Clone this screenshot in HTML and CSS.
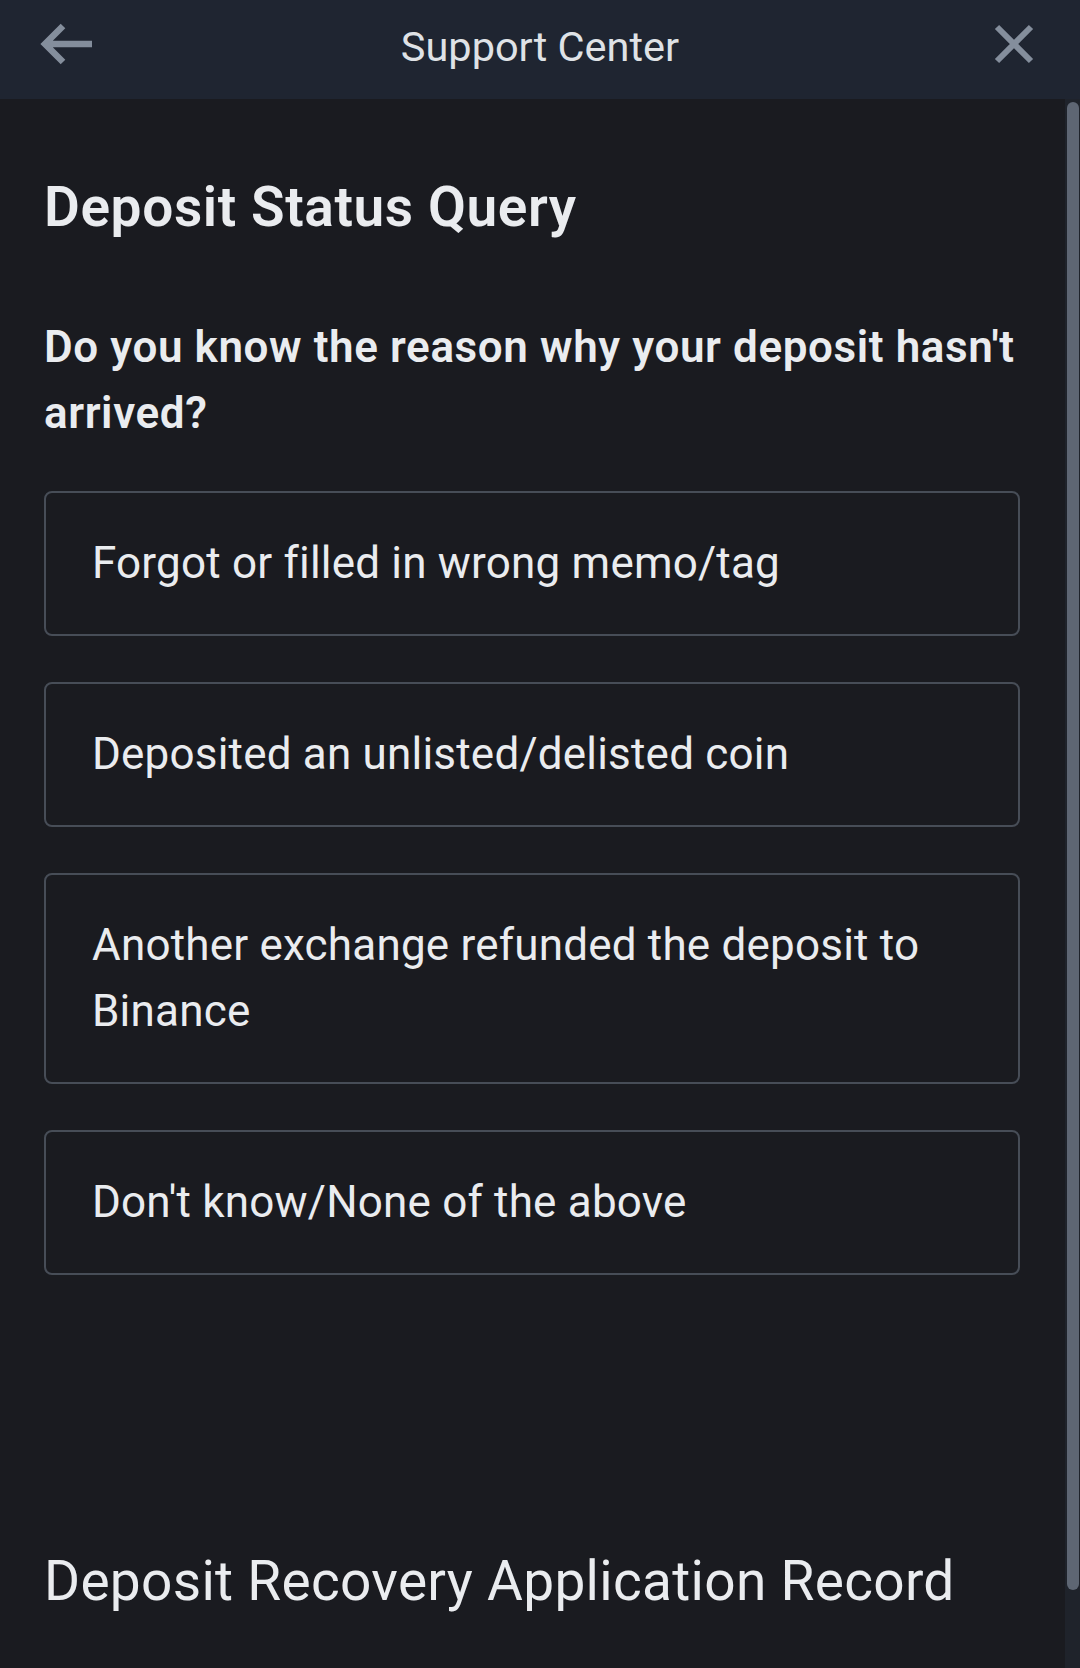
FILE: index.html
```html
<!DOCTYPE html>
<html lang="en">
<head>
<meta charset="utf-8">
<title>Support Center</title>
<link rel="stylesheet" href="styles.css">
</head>
<body>
<div class="app">
  <header class="topbar">
    <svg class="icon" viewBox="0 0 56 56" width="56" height="56" aria-hidden="true">
      <path d="M25 10 L7 28 L25 46 M7 28 H54" fill="none" stroke="#848e9c" stroke-width="6.5" stroke-linejoin="miter"/>
    </svg>
    <h1 class="topbar-title">Support Center</h1>
    <svg class="icon" viewBox="0 0 56 56" width="56" height="56" aria-hidden="true">
      <path d="M11 11 L45 45 M45 11 L11 45" fill="none" stroke="#848e9c" stroke-width="6"/>
    </svg>
  </header>
  <div class="body-row">
    <main class="content">
      <h2 class="title">Deposit Status Query</h2>
      <p class="question">Do you know the reason why your deposit hasn't arrived?</p>
      <ul class="options">
        <li class="option">Forgot or filled in wrong memo/tag</li>
        <li class="option">Deposited an unlisted/delisted coin</li>
        <li class="option">Another exchange refunded the deposit to Binance</li>
        <li class="option">Don't know/None of the above</li>
      </ul>
      <h2 class="record-title">Deposit Recovery Application Record</h2>
    </main>
    <div class="scrollbar"><div class="thumb"></div></div>
  </div>
</div>
</body>
</html>
```
FILE: styles.css
```css
html, body {
  margin: 0;
  padding: 0;
  height: 1668px;
  overflow: hidden;
  background: #1a1b20;
}
body {
  font-family: Roboto, "Liberation Sans", sans-serif;
  color: #eaecef;
}
.app {
  display: flex;
  flex-direction: column;
  height: 1668px;
}
.topbar {
  height: 99px;
  flex: 0 0 99px;
  background: #1f2531;
  display: flex;
  justify-content: space-between;
  align-items: flex-start;
  padding: 0 38px;
  box-sizing: border-box;
}
.icon {
  display: block;
  margin-top: 16px;
}
.topbar-title {
  margin: 15px 0 0;
  font-size: 41.5px;
  line-height: 64px;
  font-weight: 400;
  color: #dfe2e6;
}
.body-row {
  flex: 1;
  display: flex;
  min-height: 0;
}
.content {
  flex: 1;
  padding: 75px 45px 0 44px;
  box-sizing: border-box;
}
.title {
  margin: 0;
  font-size: 55px;
  line-height: 66px;
  font-weight: 600;
  letter-spacing: 0.6px;
}
.question {
  margin: 74px 0 0;
  font-size: 44px;
  line-height: 66px;
  font-weight: 600;
  letter-spacing: 0.6px;
}
.options {
  list-style: none;
  margin: 45px 0 0;
  padding: 0;
  display: flex;
  flex-direction: column;
  gap: 46px;
}
.option {
  border: 2px solid #474d57;
  border-radius: 8px;
  padding: 37px 46px 38px;
  font-size: 44px;
  line-height: 66px;
  font-weight: 400;
  letter-spacing: 0.2px;
}
.record-title {
  margin: 273px 0 0;
  font-size: 55px;
  line-height: 66px;
  font-weight: 400;
  letter-spacing: 0.3px;
}
.scrollbar {
  flex: 0 0 15px;
  background: #1f232b;
}
.thumb {
  margin: 3px 1px 0 2px;
  height: 1488px;
  background: #5e6673;
  border-radius: 6px;
}
```
